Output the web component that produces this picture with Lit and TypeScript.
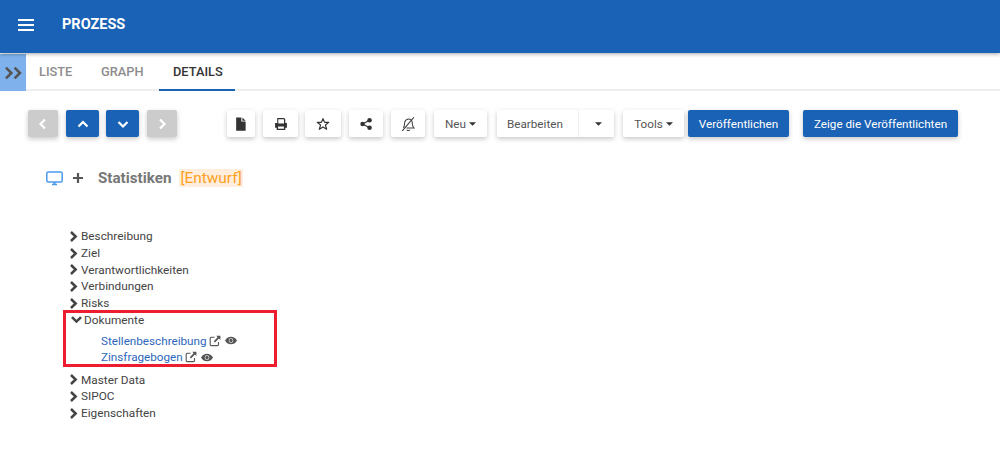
import { LitElement, html, css, svg } from "lit";
import { customElement } from "lit/decorators.js";

const chevRight = html`<svg class="chev" viewBox="0 0 10 12"><path d="M2.2 1 L7.4 6 L2.2 11" fill="none" stroke="currentColor" stroke-width="2.800"/></svg>`;
const chevDown = html`<svg class="chevd" viewBox="0 0 12 10"><path d="M1 2.300 L6 7.300 L11 2.300" fill="none" stroke="currentColor" stroke-width="2.800"/></svg>`;
const caret = html`<svg class="caret" viewBox="0 0 8 4"><path d="M0 0H8L4 4Z" fill="currentColor"/></svg>`;
const ext = html`<svg class="ext" viewBox="0 0 12 12"><path d="M9.500 7v2.600a1 1 0 0 1-1 1H2.200a1 1 0 0 1-1-1V3.300a1 1 0 0 1 1-1H5.500" fill="none" stroke="currentColor" stroke-width="1.100"/><path d="M7.200 .8H11.400V5L9.900 3.600 6 7.400 4.800 6.200 8.600 2.300Z" fill="currentColor"/></svg>`;
const eye = html`<svg class="eye" viewBox="0 0 12 8"><path fill-rule="evenodd" d="M0 4C1.500 1.300 3.600 .2 6 .2S10.500 1.300 12 4C10.500 6.700 8.400 7.800 6 7.800S1.500 6.700 0 4ZM6 1.700A2.300 2.300 0 1 0 6 6.300 2.300 2.300 0 0 0 6 1.700Z" fill="currentColor"/><circle cx="6" cy="4" r="1.700" fill="currentColor"/></svg>`;

const icons: Record<string, unknown> = {
  file: svg`<path d="M2 .5H6.800V4.200H10.800V12.800H2Z M7.800 .5L10.800 3.400H7.800Z" fill="#333"/>`,
  print: svg`<path fill-rule="evenodd" d="M3 1H9.500L10.500 2V5.500H12V10H10.500V12H2.500V10H1V5.500H3ZM4 2.200V6H9.300V2.200ZM3.800 8.800V10.800H9.200V8.800Z" fill="#333"/>`,
  star: svg`<path d="M6.500 1.500L8 5H11.800L8.800 7.500L9.900 11.400L6.500 9.200L3.100 11.400L4.200 7.500L1.200 5H5Z" fill="none" stroke="#333" stroke-width="1.100" stroke-linejoin="round"/>`,
  share: svg`<circle cx="3.300" cy="6.500" r="2.100" fill="#333"/><circle cx="9.800" cy="3" r="2.100" fill="#333"/><circle cx="9.800" cy="10" r="2.100" fill="#333"/><path d="M3.300 6.500L9.800 3M3.300 6.500L9.800 10" stroke="#333" stroke-width="1.200"/>`,
  bell: svg`<path d="M2.200 10.200C3.500 8.800 3 6.500 3.500 4.800C4 3 5.500 1.800 7 1.800C8.800 1.800 10.200 3.200 10.400 5C10.600 7 10.400 8.800 11.900 10.200H5M5.400 11.800C6 12.800 7.600 12.800 8.200 11.800" fill="none" stroke="#444" stroke-width="1"/><path d="M1 13.200L12 .2" stroke="#444" stroke-width="1"/>`,
};

@customElement("app-root")
export class AppRoot extends LitElement {
  static styles = css`
    :host { display: block; width: 1000px; height: 457px; overflow: hidden; background: #fff; font-family: Roboto, "Liberation Sans", sans-serif; color: #444; }
    .top { height: 53px; background: #1a62b5; display: flex; align-items: center; box-shadow: 0 1px 4px rgba(0,0,0,.35); position: relative; gap: 25px; padding: 0 0 4px 18px; box-sizing: border-box; }
    .burger { width: 16px; height: 12px; display: flex; flex-direction: column; justify-content: space-between; }
    .burger i { display: block; height: 2px; background: #fff; }
    .title { color: #fff; font-size: 14.500px; font-weight: 700; margin-left: 3px; }
    .tabsrow { display: flex; height: 38px; }
    .toggle { width: 26px; background: #7fb2ec; color: #555; display: flex; align-items: center; justify-content: center; margin-top: 1px; height: 37px; }
    .toggle svg { width: 19px; height: 14px; }
    .tabs { flex: 1; display: flex; border-bottom: 2px solid #eee; height: 38px; box-sizing: border-box; }
    .tab { font-size: 12.800px; font-weight: 500; color: #8c8c8c; height: 38px; box-sizing: border-box; display: flex; align-items: center; border-bottom: 2px solid transparent; }
    .tab.l { width: 62px; padding-left: 13px; }
    .tab.g { width: 71px; padding-left: 13px; }
    .tab.active { color: #333; border-bottom-color: #1a62b5; width: 76px; padding-left: 14px; }
    .toolbar { display: flex; height: 27px; margin: 19px 0 0 28px; }
    button { all: unset; box-sizing: border-box; height: 27px; display: flex; align-items: center; justify-content: center; font-size: 11.700px; border-radius: 2px; box-shadow: 0 2px 5px rgba(0,0,0,.22); background: #fff; color: #555; font-family: inherit; flex: none; }
    .nav { background: #1a62b5; color: #fff; width: 33px; }
    .nav.off { background: #ccc; width: 30px; }
    .nav svg { width: 12px; height: 12px; }
    .ic svg { width: 14px; height: 14px; }
    .blue { background: #1a62b5; color: #fff; }
    .caret { width: 7px; height: 4px; margin-left: 3px; color: #333; }
    .split { display: flex; box-shadow: 0 2px 5px rgba(0,0,0,.22); border-radius: 2px; margin-left: 10px; }
    .split button { box-shadow: none; }
    .split .b { width: 82px; border-right: 1px solid #eee; justify-content: flex-start; padding-left: 10px; }
    .split .c { width: 35px; }
    .heading { display: flex; align-items: center; height: 20px; margin: 31px 0 0 46px; }
    .heading .mon { width: 17px; height: 15px; }
    .heading .plus { width: 10px; height: 10px; margin-left: 10px; }
    .heading b { font-size: 15.200px; color: #777; margin-left: 15px; font-weight: 700; }
    .heading span { font-size: 15.400px; color: #ff9f1c; background: #ffeedd; margin-left: 8px; padding: 0 1px; line-height: 18px; }
    .tree { margin: 40px 0 0 63px; font-size: 11.800px; color: #444; }
    .row { height: 16.700px; display: flex; align-items: center; padding-left: 6px; gap: 3px; line-height: 14px; }
    .chev { width: 9px; height: 11px; color: #444; flex: none; }
    .chevd { width: 11px; height: 9px; color: #444; flex: none; margin-left: -1px; }
    .box { width: 214px; height: 57px; box-sizing: border-box; border: 3px solid #ed1c2e; margin: -1px 0 4px 0; padding: 0 0 0 3px; }
    .box .row { padding-left: 3px; height: 13px; gap: 2px; }
    .links { padding: 6px 0 0 32px; font-size: 11.700px; }
    .link { display: flex; align-items: center; height: 16.500px; color: #2d67bd; gap: 2px; }
    .ext { width: 12px; height: 12px; color: #555; }
    .eye { width: 12px; height: 9px; color: #555; margin-left: 2px; }
  `;

  private row(t: string) { return html`<div class="row">${chevRight}<span>${t}</span></div>`; }
  private ic(name: string, w: number, ml: number) {
    return html`<button class="ic" style="width:${w}px;margin-left:${ml}px"><svg viewBox="0 0 13 13">${icons[name]}</svg></button>`;
  }

  render() {
    return html`
      <div class="top">
        <div class="burger"><i></i><i></i><i></i></div>
        <div class="title">PROZESS</div>
      </div>
      <div class="tabsrow">
        <div class="toggle"><svg viewBox="0 0 17 13"><path d="M1.500 1.500L6.500 6.500L1.500 11.500M9.500 1.500L14.500 6.500L9.500 11.500" fill="none" stroke="currentColor" stroke-width="2.400"/></svg></div>
        <div class="tabs">
          <div class="tab l">LISTE</div><div class="tab g">GRAPH</div><div class="tab active">DETAILS</div>
        </div>
      </div>
      <div class="toolbar">
        <button class="nav off"><svg viewBox="0 0 12 12"><path d="M8 1.500L3.500 6L8 10.500" fill="none" stroke="currentColor" stroke-width="2.200"/></svg></button>
        <button class="nav" style="margin-left:8px"><svg viewBox="0 0 12 12"><path d="M1.500 8.500L6 4L10.500 8.500" fill="none" stroke="currentColor" stroke-width="2.200"/></svg></button>
        <button class="nav" style="margin-left:7px"><svg viewBox="0 0 12 12"><path d="M1.500 4L6 8.500L10.500 4" fill="none" stroke="currentColor" stroke-width="2.200"/></svg></button>
        <button class="nav off" style="margin-left:8px"><svg viewBox="0 0 12 12"><path d="M4 1.500L8.500 6L4 10.500" fill="none" stroke="currentColor" stroke-width="2.200"/></svg></button>
        ${this.ic("file", 28, 50)}${this.ic("print", 35, 8)}${this.ic("star", 36, 7)}${this.ic("share", 34, 8)}${this.ic("bell", 34, 8)}
        <button style="width:53px;margin-left:9px">Neu${caret}</button>
        <div class="split"><button class="b">Bearbeiten</button><button class="c">${caret}</button></div>
        <button style="width:61px;margin-left:9px">Tools${caret}</button>
        <button class="blue" style="width:101px;margin-left:4px">Veröffentlichen</button>
        <button class="blue" style="width:155px;margin-left:14px">Zeige die Veröffentlichten</button>
      </div>
      <div class="heading">
        <svg class="mon" viewBox="0 0 17 15"><rect x=".8" y="1" width="15.400" height="10" rx="1.500" fill="none" stroke="#4a9bef" stroke-width="1.500"/><path d="M6 13.500H11" stroke="#4a9bef" stroke-width="1.500"/><path d="M7.500 11H9.500V13H7.500Z" fill="#4a9bef"/></svg>
        <svg class="plus" viewBox="0 0 10 10"><path d="M5 0V10M0 5H10" stroke="#555" stroke-width="2.200"/></svg>
        <b>Statistiken</b><span>[Entwurf]</span>
      </div>
      <div class="tree">
        ${this.row("Beschreibung")}${this.row("Ziel")}${this.row("Verantwortlichkeiten")}${this.row("Verbindungen")}${this.row("Risks")}
        <div class="box">
          <div class="row">${chevDown}<span>Dokumente</span></div>
          <div class="links">
            <div class="link">Stellenbeschreibung ${ext}${eye}</div>
            <div class="link">Zinsfragebogen ${ext}${eye}</div>
          </div>
        </div>
        ${this.row("Master Data")}${this.row("SIPOC")}${this.row("Eigenschaften")}
      </div>
    `;
  }
}
